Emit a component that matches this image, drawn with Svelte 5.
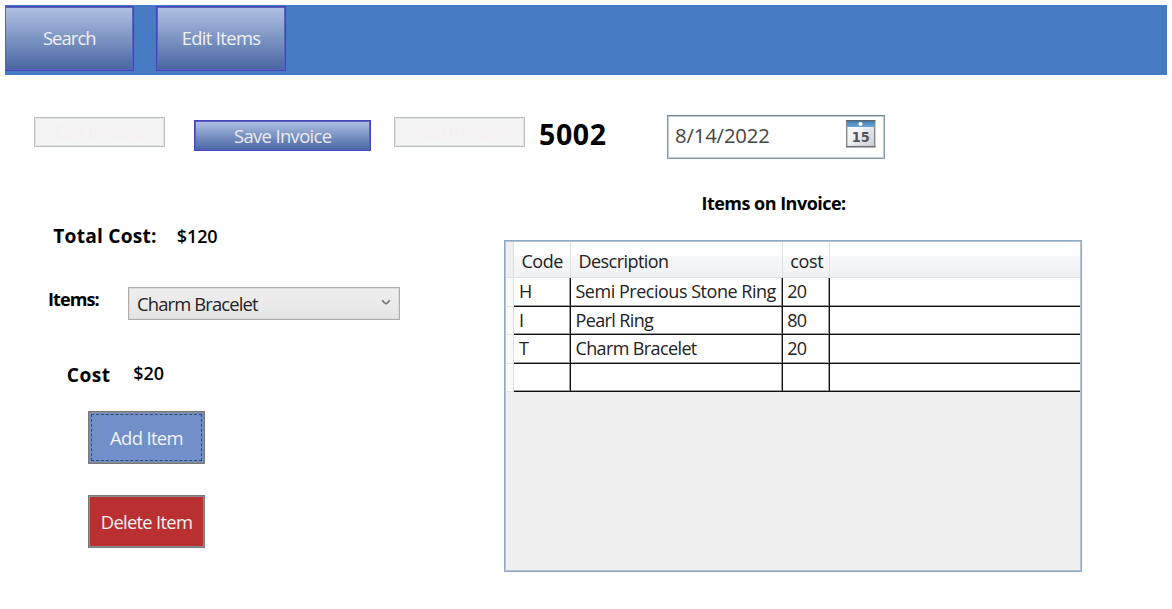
<script>
  const rows = [
    { code: 'H', description: 'Semi Precious Stone Ring', cost: '20' },
    { code: 'I', description: 'Pearl Ring', cost: '80' },
    { code: 'T', description: 'Charm Bracelet', cost: '20' },
    { code: '', description: '', cost: '' }
  ];
</script>

<div class="window">
  <nav class="topbar">
    <button class="nav first"><span class="search">Search</span></button>
    <button class="nav"><span class="edit">Edit Items</span></button>
  </nav>

  <div class="toolbar">
    <button class="ghost" disabled>Edit Invoice</button>
    <button class="save">Save Invoice</button>
    <button class="ghost" disabled>Add Invoice</button>
    <span class="number">5002</span>
    <div class="date">
      <span>8/14/2022</span>
      <svg width="30" height="28" viewBox="0 0 30 28">
        <defs>
          <linearGradient id="page" x1="0" y1="0" x2="1" y2="1">
            <stop offset="0.3" stop-color="#f8f9fa" />
            <stop offset="1" stop-color="#c9ccd1" />
          </linearGradient>
          <linearGradient id="band" x1="0" y1="0" x2="0" y2="1">
            <stop offset="0" stop-color="#417fb5" />
            <stop offset="1" stop-color="#6aa5d6" />
          </linearGradient>
        </defs>
        <rect x="0.7" y="0.7" width="28" height="26" fill="url(#page)" stroke="#85888c" stroke-width="1.4" />
        <rect x="1" y="1" width="27.5" height="6" fill="url(#band)" />
        <path d="M0 .7H29.4" stroke="#55636f" stroke-width="1.2" />
        <circle cx="14.5" cy="4" r="2.1" fill="#fff" />
        <path d="M0 26.6H29.4" stroke="#696c70" stroke-width="1.3" />
        <text x="14.8" y="22.2" text-anchor="middle" textLength="18" lengthAdjust="spacingAndGlyphs">15</text>
      </svg>
    </div>
  </div>

  <div class="content">
    <section class="left">
      <div class="line total"><b class="black">Total Cost:</b><b class="semi t120">$120</b></div>
      <div class="line items">
        <b class="semi">Items:</b>
        <div class="combo">
          <span>Charm Bracelet</span>
          <svg width="10" height="7" viewBox="0 0 10 7"><path d="M1.3 1.2C2.5 3 3.5 4.2 5 4.7C6.5 4.2 7.5 3 8.7 1.2" fill="none" stroke="#777" stroke-width="1.7" /></svg>
        </div>
      </div>
      <div class="line cost"><b class="black">Cost</b><b class="semi c20">$20</b></div>
      <button class="action add"><span>Add Item</span></button>
      <button class="action delete"><span>Delete Item</span></button>
    </section>

    <section class="right">
      <h2>Items on Invoice:</h2>
      <div class="grid">
        <div class="row head">
          <i></i><span class="hcode">Code</span><span class="hdesc">Description</span><span class="hcost">cost</span><span></span>
        </div>
        {#each rows as row}
          <div class="row">
            <i></i><span>{row.code}</span><span class:desc={row.description.length > 20}>{row.description}</span><span>{row.cost}</span><span></span>
          </div>
        {/each}
      </div>
    </section>
  </div>
</div>

<style>
  :global(body) { background: #fff; }
  .window {
    width: 1172px;
    height: 609px;
    box-sizing: border-box;
    padding: 4.5px 5px 0 5.3px;
    overflow: hidden;
    font: 18.4px/24px 'Open Sans', 'Noto Sans', sans-serif;
    color: #222;
    white-space: nowrap;
  }
  .window * { box-sizing: border-box; }
  button { font: inherit; padding: 0; margin: 0; border-radius: 0; white-space: nowrap; }

  .topbar {
    height: 70.5px;
    padding-top: 1.5px;
    background: #467ac3;
    display: flex;
    gap: 21.5px;
  }
  .nav {
    width: 130.5px;
    height: 64.5px;
    border: 1px solid #4545b9;
    box-shadow: inset 0 0 0 1px #5a5fc0;
    background: linear-gradient(#b1c2e4, #4766a1);
    color: #f0f0f3;
  }
  .nav.first { width: 129px; border-left: 0; }
  .nav span { display: block; }
  .search { letter-spacing: -0.9px; }
  .edit { letter-spacing: -0.65px; }

  .toolbar { display: flex; height: 84px; padding: 42px 0 0 28.7px; }
  .ghost {
    width: 131px;
    height: 30px;
    border: 1px solid #b9bfc1;
    box-shadow: inset 0 0 0 1px #e2e5e5;
    background: #f4f4f4;
    color: #f8f0f0;
    letter-spacing: -0.6px;
  }
  .save {
    width: 177.5px;
    height: 30.5px;
    padding-top: 2px;
    margin: 3px 22.5px 0 29px;
    border: 1px solid #4545b9;
    box-shadow: inset 0 0 0 1px #5a5fc0;
    background: linear-gradient(#b1c2e4, #4766a1);
    color: #ececf2;
    letter-spacing: -0.62px;
  }
  .number { margin: 2px 0 0 14px; width: 128px; font-size: 28.5px; line-height: 30px; font-weight: 700; color: #000; letter-spacing: 0.6px; }
  .date {
    width: 218px;
    height: 43.5px;
    margin-top: -2px;
    border: 1px solid #8497a8;
    border-top-color: #708495;
    box-shadow: inset 0 0 0 1px #c5ced6;
    display: flex;
    justify-content: space-between;
    padding: 4px 8px 0 7px;
    font-size: 20.3px;
    line-height: 30px;
    color: #444;
  }
  .date span { letter-spacing: -0.15px; }
  .date text { font: 700 13.5px 'DejaVu Sans', sans-serif; fill: #555; }

  .content { display: flex; }
  .left { width: 498.7px; padding-top: 65px; }
  .line { display: flex; }
  b { color: #000; }
  .black { font-weight: 700; font-size: 19.2px; }
  .semi { font-weight: 600; font-size: 18px; }
  .total { padding-left: 48px; height: 63px; }
  .total .black { width: 123.5px; letter-spacing: 0.2px; }
  .t120 { letter-spacing: -0.1px; }
  .items { padding-left: 42.7px; height: 74px; }
  .items .semi { width: 80px; font-weight: 700; letter-spacing: -0.9px; }
  .combo {
    width: 272px;
    height: 33px;
    border: 1px solid #adadad;
    box-shadow: inset 0 0 0 1px #dcdcdc;
    background: linear-gradient(#efefef, #e5e5e5);
    display: flex;
    justify-content: space-between;
    align-items: center;
    padding: 0 8px 0 8px;
    letter-spacing: -0.85px;
  }
  .combo svg { margin-top: -3px; }
  .cost { padding-left: 61.5px; height: 50px; }
  .cost .black { width: 66.5px; padding-top: 2px; letter-spacing: 0.4px; }
  .c20 { letter-spacing: -0.1px; }
  .action {
    display: block;
    width: 117px;
    height: 53px;
    margin-left: 82.7px;
    border: 1px solid #797979;
    box-shadow: inset 0 0 0 1px #8b8b90;
    color: #f3f3f6;
    letter-spacing: -0.65px;
  }
  .add { background: #7190ca; padding: 2px; }
  .add span { display: flex; width: 100%; height: 100%; align-items: center; justify-content: center; border: 1.5px dashed #36496d; }
  .delete { background: #ba2f30; margin-top: 31px; letter-spacing: -0.72px; }

  .right { padding-top: 32px; }
  h2 { margin: 0 0 0 197.5px; height: 49px; font-size: 18px; line-height: 24px; font-weight: 700; color: #000; letter-spacing: -0.52px; }
  .grid { width: 578.5px; height: 332px; border: 1px solid #8da7c5; box-shadow: inset 0 0 0 1px #b4c5d8; padding: 1px; background: #efefef; }
  .row { display: grid; grid-template-columns: 8.5px 56.5px 211.7px 47.5px 1fr; grid-template-rows: 100%; height: 28.5px; background: #fff; }
  .row i { background: #fafafa; border-right: 1px solid #ddd; border-bottom: 1px solid #e4e4e4; }
  .row span {
    border-right: 1px solid #111;
    border-bottom: 1px solid #111;
    box-shadow: inset -1px -1px 0 #9a9a9a;
    padding: 0 0 0 4.5px;
    line-height: 27.5px;
    letter-spacing: -0.62px;
    font-size: 18px;
  }
  .row span:last-child { border-right: 0; box-shadow: inset 0 -1px 0 #9a9a9a; }
  .head { height: 36px; background: linear-gradient(#fff 0, #fff 38%, #f7f8f9 40%, #eff1f3 100%); }
  .head i { background: #efefef; }
  .head span, .head span:last-child { border-color: #dfe1e3; line-height: 31.5px; padding: 3.5px 0 0 7.5px; box-shadow: none; }
  .row .desc { letter-spacing: -0.48px; }
  .row .hcode { letter-spacing: -0.5px; padding-left: 7px; }
  .row .hdesc { letter-spacing: -0.55px; }
  .row .hcost { letter-spacing: -0.3px; }
</style>
